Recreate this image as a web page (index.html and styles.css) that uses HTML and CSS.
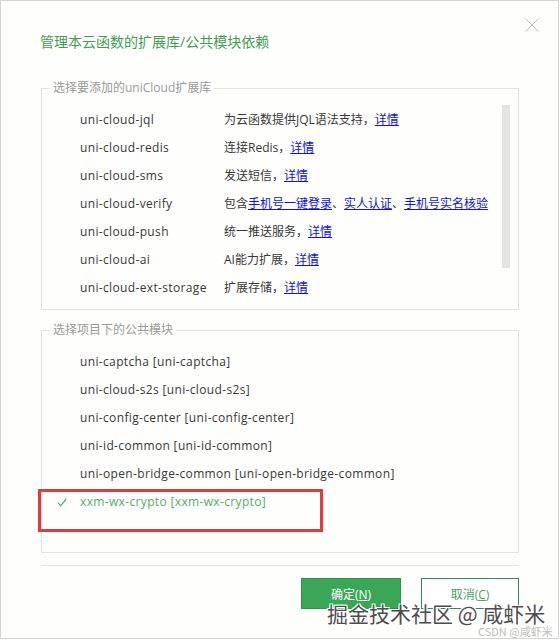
FILE: index.html
```html
<!DOCTYPE html>
<html lang="zh-CN">
<head>
  <meta charset="UTF-8" />
  <meta name="viewport" content="width=device-width, initial-scale=1.0" />
  <title>管理本云函数的扩展库/公共模块依赖</title>
  <link rel="stylesheet" href="styles.css">
</head>
<body>
  <div class="dialog">
    <div class="header">
      <div class="title">管理本云函数的扩展库/公共模块依赖</div>
      <button class="close" title="关闭">
        <svg width="14" height="14" viewBox="0 0 14 14">
          <path d="M0.5 0.5 L13.5 13.5 M13.5 0.5 L0.5 13.5" stroke="#bdbdbd" stroke-width="1" fill="none" />
        </svg>
      </button>
    </div>

    <fieldset class="group ext-group">
      <legend>选择要添加的uniCloud扩展库</legend>
      <div class="ext-body">
        <div class="ext-list">
          <div class="ext-row"><span class="name">uni-cloud-jql</span><span class="desc">为云函数提供JQL语法支持，<a href="#">详情</a></span></div>
          <div class="ext-row"><span class="name">uni-cloud-redis</span><span class="desc">连接Redis，<a href="#">详情</a></span></div>
          <div class="ext-row"><span class="name">uni-cloud-sms</span><span class="desc">发送短信，<a href="#">详情</a></span></div>
          <div class="ext-row"><span class="name">uni-cloud-verify</span><span class="desc">包含<a href="#">手机号一键登录</a>、<a href="#">实人认证</a>、<a href="#">手机号实名核验</a></span></div>
          <div class="ext-row"><span class="name">uni-cloud-push</span><span class="desc">统一推送服务，<a href="#">详情</a></span></div>
          <div class="ext-row"><span class="name">uni-cloud-ai</span><span class="desc">AI能力扩展，<a href="#">详情</a></span></div>
          <div class="ext-row"><span class="name">uni-cloud-ext-storage</span><span class="desc">扩展存储，<a href="#">详情</a></span></div>
        </div>
        <div class="scrollbar"><div class="thumb"></div></div>
      </div>
    </fieldset>

    <fieldset class="group module-group">
      <legend>选择项目下的公共模块</legend>
      <div class="module-list">
        <div class="module-row"><span class="check"></span>uni-captcha [uni-captcha]</div>
        <div class="module-row"><span class="check"></span>uni-cloud-s2s [uni-cloud-s2s]</div>
        <div class="module-row"><span class="check"></span>uni-config-center [uni-config-center]</div>
        <div class="module-row"><span class="check"></span>uni-id-common [uni-id-common]</div>
        <div class="module-row"><span class="check"></span>uni-open-bridge-common [uni-open-bridge-common]</div>
        <div class="module-row selected">
          <span class="check">
            <svg width="10" height="9" viewBox="0 0 10 9">
              <path d="M0.8 4.6 L3.8 7.6 L9.2 1" stroke="#4caf63" stroke-width="1.2" fill="none" />
            </svg>
          </span>xxm-wx-crypto [xxm-wx-crypto]
        </div>
      </div>
    </fieldset>

    <div class="footer">
      <button class="btn btn-ok">确定(<u>N</u>)</button>
      <button class="btn btn-cancel">取消(<u>C</u>)</button>
    </div>

    <div class="watermark">掘金技术社区 @ 咸虾米</div>
    <div class="watermark-small">CSDN @咸虾米</div>
  </div>
</body>
</html>
```

FILE: styles.css
```css
* {
  box-sizing: border-box;
}
body {
  margin: 0;
  font-family: "Open Sans", "Noto Sans CJK SC", sans-serif;
  font-size: 12px;
  color: #383838;
  background: #fff;
}
.dialog {
  position: relative;
  width: 559px;
  height: 639px;
  border: 1px solid #d4d4d4;
  background: #fefefc;
  padding: 0 39px 0 40px;
}
.header {
  display: flex;
  justify-content: space-between;
  align-items: flex-start;
  height: 79px;
  padding-top: 17px;
  margin-right: -20px;
}
.title {
  margin-top: 14px;
  margin-left: -1px;
  font-size: 14px;
  line-height: 20px;
  color: #3f9f52;
}
.close {
  width: 14px;
  height: 14px;
  padding: 0;
  border: none;
  background: none;
  display: flex;
}
.group {
  margin: 0;
  padding: 0;
  border: 1px solid #e3e3e1;
  min-width: 0;
}
.group legend {
  margin-left: 8px;
  padding: 0 3px;
  line-height: 16px;
  color: #9a9a9a;
}
.ext-body {
  display: flex;
  padding: 10px 8px 7px 38px;
}
.ext-list {
  flex: 1;
}
.ext-row {
  display: grid;
  grid-template-columns: 144px 1fr;
  height: 28px;
  line-height: 28px;
  white-space: nowrap;
}
.ext-row .name {
  letter-spacing: 0.35px;
}
.ext-row a {
  color: #1010e0;
  text-decoration: underline;
}
.scrollbar {
  width: 8px;
  margin-top: -1px;
}
.thumb {
  height: 163px;
  background: #e4e4e2;
}
.module-group {
  margin-top: 12px;
}
.module-list {
  padding: 10px 0 36px 0;
}
.module-row {
  display: flex;
  align-items: center;
  height: 28px;
  line-height: 28px;
  letter-spacing: 0.35px;
  white-space: nowrap;
}
.check {
  display: flex;
  width: 38px;
  padding-left: 15px;
}
.selected {
  position: relative;
  color: #4caf63;
}
.selected::after {
  content: "";
  position: absolute;
  left: -4px;
  top: 1px;
  width: 279px;
  height: 37px;
  border: 3px solid #e53a3a;
}
.footer {
  margin-top: 12px;
  border-top: 1px solid #e3e3e1;
  padding-top: 12px;
  display: flex;
  justify-content: flex-end;
  gap: 20px;
}
.btn {
  width: 100px;
  height: 31px;
  font-family: inherit;
  font-size: 12px;
  padding: 0;
}
.btn-ok {
  background: #3aa757;
  border: 1px solid #2f9049;
  color: #fff;
}
.btn-cancel {
  width: 98px;
  background: #fff;
  border: 1px solid #2a8c5c;
  color: #4aa35f;
}
.watermark {
  position: absolute;
  left: 326px;
  top: 598px;
  font-family: "Noto Sans CJK SC", sans-serif;
  font-size: 21px;
  line-height: 28px;
  color: #4d4d4d;
  text-shadow: 1px 1px 0 #fff, -1px -1px 0 #fff, 1px -1px 0 #fff, -1px 1px 0 #fff;
  white-space: nowrap;
}
.watermark-small {
  position: absolute;
  left: 477px;
  top: 623px;
  font-family: "Noto Sans CJK SC", sans-serif;
  font-size: 11px;
  line-height: 14px;
  color: #bdbdbd;
  white-space: nowrap;
}
```
